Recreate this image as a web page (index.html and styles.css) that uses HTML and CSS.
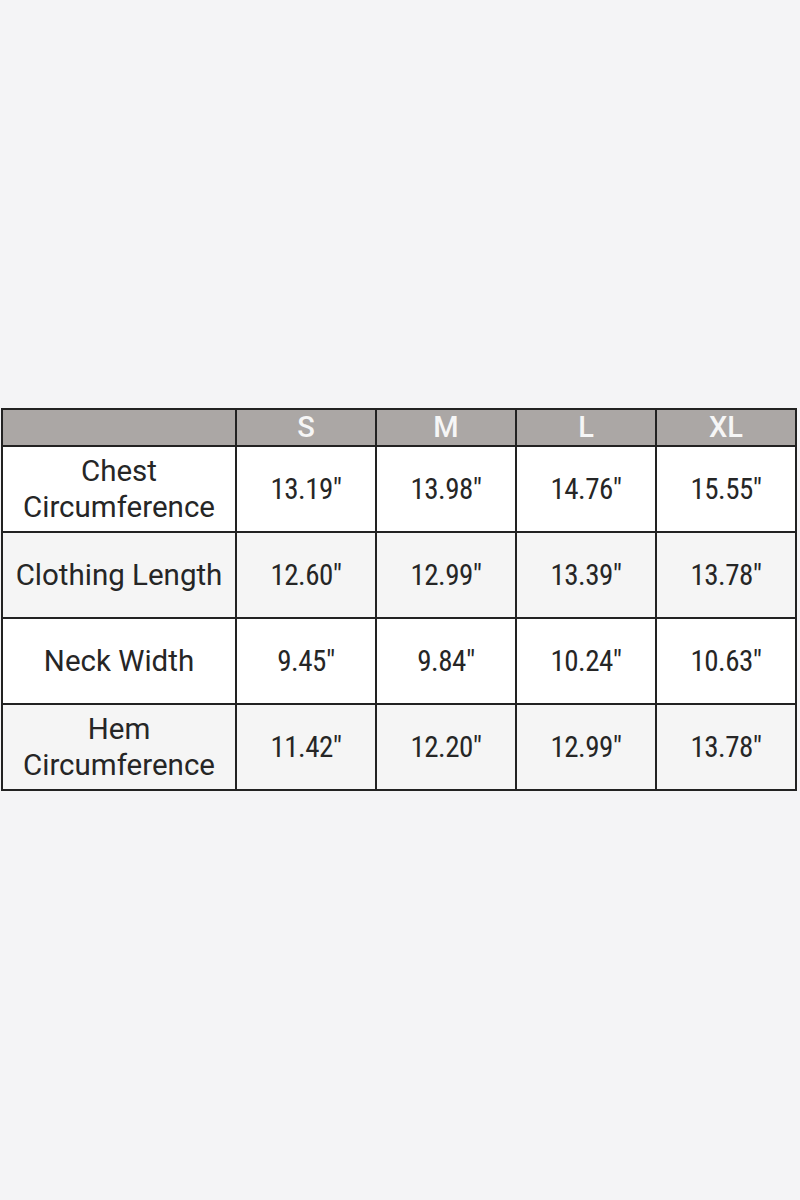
FILE: index.html
```html
<!DOCTYPE html>
<html>
<head>
<meta charset="utf-8">
<link rel="stylesheet" href="styles.css">
</head>
<body>
<div class="page">
  <table class="size-table">
    <colgroup>
      <col class="c-label"><col class="c-size"><col class="c-size"><col class="c-size"><col class="c-size">
    </colgroup>
    <thead>
      <tr><th></th><th>S</th><th>M</th><th>L</th><th>XL</th></tr>
    </thead>
    <tbody>
      <tr class="odd"><td class="label">Chest<br>Circumference</td><td>13.19"</td><td>13.98"</td><td>14.76"</td><td>15.55"</td></tr>
      <tr class="even"><td class="label">Clothing Length</td><td>12.60"</td><td>12.99"</td><td>13.39"</td><td>13.78"</td></tr>
      <tr class="odd"><td class="label">Neck Width</td><td>9.45"</td><td>9.84"</td><td>10.24"</td><td>10.63"</td></tr>
      <tr class="even"><td class="label">Hem<br>Circumference</td><td>11.42"</td><td>12.20"</td><td>12.99"</td><td>13.78"</td></tr>
    </tbody>
  </table>
</div>
</body>
</html>
```
FILE: styles.css
```css
html, body {
  margin: 0;
  padding: 0;
  background: #f4f4f6;
}
.page {
  width: 800px;
  height: 1200px;
  padding-top: 408px;
  padding-left: 1px;
  box-sizing: border-box;
}
.size-table {
  border-collapse: collapse;
  table-layout: fixed;
  width: 796px;
  color: #262626;
}
.c-label { width: 234px; }
.c-size { width: 140px; }
.size-table th, .size-table td {
  border: 2px solid #222;
  text-align: center;
  vertical-align: middle;
  padding: 0;
}
.size-table th {
  background: #aba7a5;
  color: #f6f6f6;
  font-family: "Roboto", "Liberation Sans", sans-serif;
  font-size: 29px;
  font-weight: 500;
  height: 35px;
  line-height: 35px;
}
.size-table td {
  height: 84px;
  font-family: "Roboto Condensed", "Roboto", sans-serif;
  font-stretch: condensed;
  font-size: 29px;
  line-height: 36px;
  letter-spacing: -0.5px;
}
.size-table td.label {
  font-family: "Roboto", "Liberation Sans", sans-serif;
  font-stretch: normal;
  font-size: 29.5px;
  letter-spacing: 0;
}
.size-table tr.odd td { background: #ffffff; }
.size-table tr.even td { background: #f5f5f5; }
```
